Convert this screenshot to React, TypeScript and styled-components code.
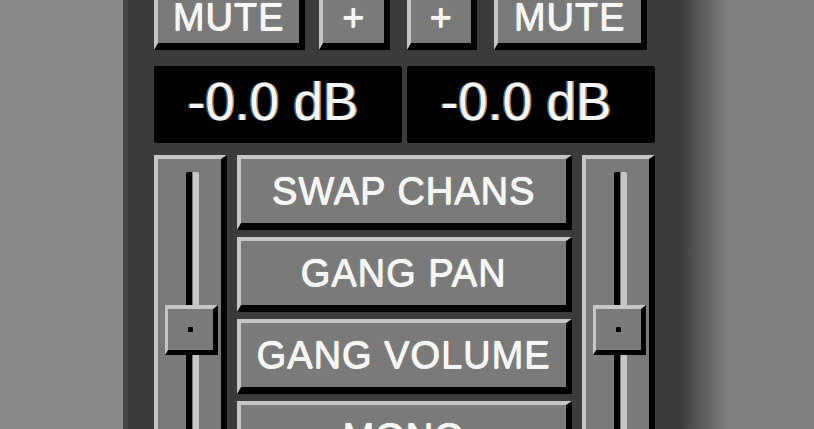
import React from "react";
import styled, { createGlobalStyle } from "styled-components";

const Global = createGlobalStyle`
  html, body { margin: 0; padding: 0; background: #808080; }
  body { overflow: hidden; }
`;

const FACE = "#7a7a7a";
const LIGHT = "#c6c6c6";
const DARK = "#3b3b3b";

const Page = styled.div`
  display: flex;
  width: 814px;
  height: 429px;
  overflow: hidden;
  background: #808080;
`;

const LeftBg = styled.div`
  flex: none;
  width: 123px;
  background: #8a8a8a;
`;

const Panel = styled.div`
  flex: none;
  width: 557px;
  box-sizing: border-box;
  border-left: 5px solid #474747;
  padding: 0 25px 0 26px;
  background: ${DARK};
  display: flex;
  flex-direction: column;
`;

const Shade = styled.div`
  flex: none;
  width: 50px;
  background: linear-gradient(to right, ${DARK} 0%, #5a5a5a 40%, #808080 100%);
`;

const RightBg = styled.div`
  flex: 1;
  background: #808080;
`;

const TopRow = styled.div`
  display: flex;
  height: 50px;
  flex: none;
`;

const Btn = styled.div<{ $w?: number; $ml?: number; $top?: boolean }>`
  box-sizing: border-box;
  flex: none;
  width: ${(p) => (p.$w ? `${p.$w}px` : "auto")};
  margin-left: ${(p) => p.$ml ?? 0}px;
  height: ${(p) => (p.$top ? 50 : 75)}px;
  background: ${FACE};
  border-top: ${(p) => (p.$top ? "0" : `4px solid ${LIGHT}`)};
  border-left: 4px solid ${LIGHT};
  border-right: 6px solid #000;
  border-bottom: 7px solid #000;
  padding-bottom: ${(p) => (p.$top ? 10 : 0)}px;
  display: flex;
  align-items: center;
  justify-content: center;
  font-family: "Liberation Sans", Arial, sans-serif;
  font-weight: 400;
  font-size: 38px;
  line-height: 1;
  letter-spacing: 1px;
  color: #f6f6f6;
  text-shadow: 0.6px 0 0 #f6f6f6, 0 0.6px 0 #f6f6f6, 0 0 2px #a0a0a0;
  white-space: nowrap;
`;

const Displays = styled.div`
  display: flex;
  gap: 5px;
  height: 77px;
  margin-top: 16px;
  flex: none;
`;

const Readout = styled.div`
  flex: 1;
  background: #000;
  border-radius: 2px;
  display: flex;
  align-items: center;
  justify-content: center;
  padding: 0 10px 6px 0;
  font-family: "Liberation Sans", Arial, sans-serif;
  font-size: 53px;
  line-height: 1;
  color: #f6f6f6;
  text-shadow: -1.5px 0 0 rgba(40, 150, 255, 0.8), 1.5px 0 0 rgba(255, 150, 20, 0.8);
`;

const Main = styled.div`
  margin-top: 12px;
  flex: 1;
  display: grid;
  grid-template-columns: 73px 1fr 73px;
  column-gap: 10px;
`;

const Column = styled.div`
  display: flex;
  flex-direction: column;
  gap: 7px;
`;

const Slider = styled.div`
  position: relative;
  box-sizing: border-box;
  height: 320px;
  background: ${FACE};
  border-top: 4px solid ${LIGHT};
  border-left: 4px solid ${LIGHT};
  border-right: 6px solid #000;
  padding-top: 13px;
  display: flex;
  flex-direction: column;
`;

const Groove = styled.div<{ $x: number }>`
  flex: 1;
  width: 13px;
  box-sizing: border-box;
  margin-left: ${(p) => p.$x}px;
  border-left: 6px solid #000;
  border-right: 6px solid ${LIGHT};
  border-radius: 2px 2px 0 0;
`;

const Thumb = styled.div<{ $x: number }>`
  position: absolute;
  top: 146px;
  left: ${(p) => p.$x}px;
  width: 53px;
  height: 50px;
  box-sizing: border-box;
  background: ${FACE};
  border-top: 4px solid ${LIGHT};
  border-left: 3px solid ${LIGHT};
  border-right: 5px solid #000;
  border-bottom: 5px solid #000;
  display: flex;
  align-items: center;
  justify-content: center;
  &::after {
    content: "";
    width: 5px;
    height: 5px;
    background: #000;
    border-radius: 1px;
  }
`;

export default function App() {
  return (
    <>
      <Global />
      <Page>
        <LeftBg />
        <Panel>
          <TopRow>
            <Btn $top $w={151}>MUTE</Btn>
            <Btn $top $w={71} $ml={14}>+</Btn>
            <Btn $top $w={70} $ml={17}>+</Btn>
            <Btn $top $w={153} $ml={17}>MUTE</Btn>
          </TopRow>
          <Displays>
            <Readout>-0.0 dB</Readout>
            <Readout>-0.0 dB</Readout>
          </Displays>
          <Main>
            <Slider>
              <Groove $x={28} />
              <Thumb $x={7} />
            </Slider>
            <Column>
              <Btn>SWAP CHANS</Btn>
              <Btn>GANG PAN</Btn>
              <Btn>GANG VOLUME</Btn>
              <Btn>MONO</Btn>
            </Column>
            <Slider>
              <Groove $x={28} />
              <Thumb $x={7} />
            </Slider>
          </Main>
        </Panel>
        <Shade />
        <RightBg />
      </Page>
    </>
  );
}
